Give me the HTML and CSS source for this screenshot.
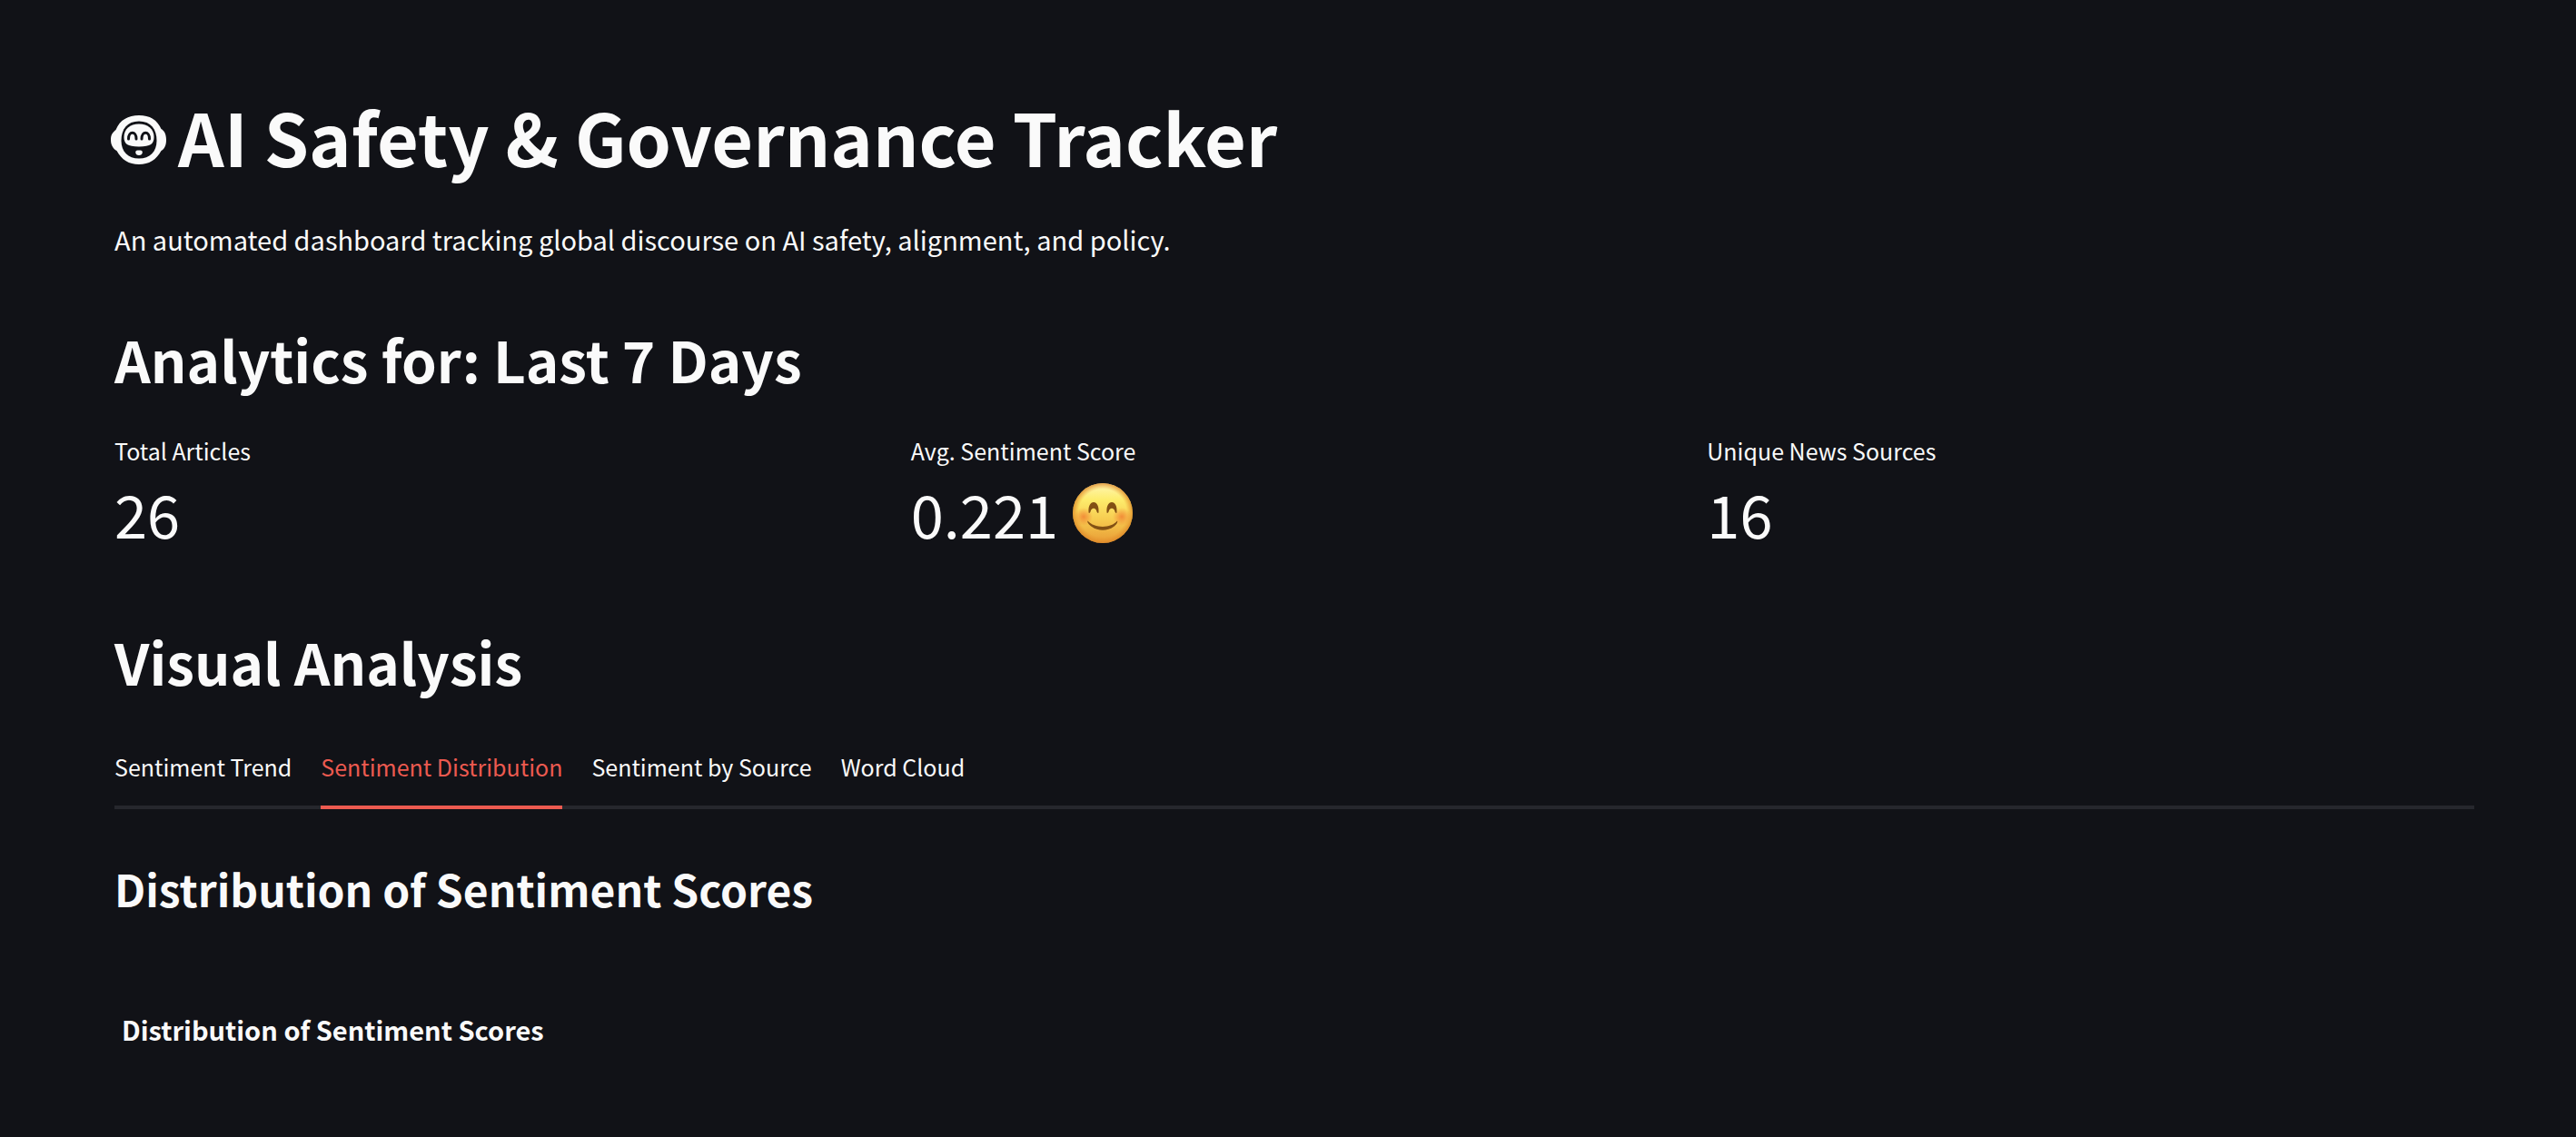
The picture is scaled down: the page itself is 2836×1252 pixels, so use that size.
FILE: index.html
```html
<!DOCTYPE html>
<html lang="en">
<head>
<meta charset="utf-8">
<meta name="viewport" content="width=device-width, initial-scale=1">
<title>AI Safety &amp; Governance Tracker</title>
<link rel="stylesheet" href="styles.css">
</head>
<body>
<main class="page">
  <h1 class="title">
    <svg class="title-icon" viewBox="0 0 62 54" aria-hidden="true">
      <path fill="currentColor" d="M31 0C43 0 51 5 55.500 15C59 17 61 21 61 27C61 33 59 37 55.500 39C50 49 42 54 31 54S12 49 6.500 39C3 37 0 33 0 27S2 19 5.500 16C10 5 19 0 31 0Z"/>
      <path fill="#111217" d="M31 6.500C44 6.500 50.500 15 50.500 28C50.500 40 43 47.500 31 47.500S11.500 40 11.500 28C11.500 15 18 6.500 31 6.500Z"/>
      <path fill="currentColor" d="M31 9.500C41 9.500 47.500 15 47.500 24C47.500 31 44 34.500 31 34.500S14.500 31 14.500 24C14.500 15 21 9.500 31 9.500Z"/>
      <path fill="none" stroke="#111217" stroke-width="3" stroke-linecap="round" d="M19.500 26C19.500 17 28 17 28 26M34 26C34 17 42.500 17 42.500 26"/>
      <path fill="currentColor" d="M29.500 38.500H32.500C36 38.500 35.500 44 31 44S26 38.500 29.500 38.500Z"/>
    </svg>
    <span>AI Safety &amp; Governance Tracker</span>
  </h1>
  <p class="intro">An automated dashboard tracking global discourse on AI safety, alignment, and policy.</p>

  <section>
    <h2 class="heading">Analytics for: Last 7 Days</h2>
    <dl class="metrics">
      <div class="metric">
        <dt>Total Articles</dt>
        <dd>26</dd>
      </div>
      <div class="metric">
        <dt>Avg. Sentiment Score</dt>
        <dd>0.221
          <svg class="smile" viewBox="0 0 66 66" role="img" aria-label="Smiling face">
            <defs>
              <linearGradient id="skin" x1="0" y1="0" x2="0" y2="1">
                <stop offset="0" stop-color="#fff7b5"/>
                <stop offset=".28" stop-color="#fdec6c"/>
                <stop offset=".6" stop-color="#f7cc50"/>
                <stop offset="1" stop-color="#e89b35"/>
              </linearGradient>
              <radialGradient id="rim">
                <stop offset=".8" stop-color="#e9922c" stop-opacity="0"/>
                <stop offset="1" stop-color="#dc8728" stop-opacity=".8"/>
              </radialGradient>
              <radialGradient id="cheek">
                <stop offset="0" stop-color="#f0782f" stop-opacity=".75"/>
                <stop offset="1" stop-color="#f0782f" stop-opacity="0"/>
              </radialGradient>
            </defs>
            <circle cx="33" cy="33" r="33" fill="url(#skin)"/>
            <circle cx="33" cy="33" r="33" fill="url(#rim)"/>
            <circle cx="12" cy="37" r="10" fill="url(#cheek)"/>
            <circle cx="54" cy="37" r="10" fill="url(#cheek)"/>
            <path fill="#825014" d="M17.500 32C17 25 19.500 21 23 21S29 25 28.500 32C28.500 33.500 27 33 26.500 31.500C25.500 26.500 20.500 26.500 19.500 31.500C19 33 17.500 33.500 17.500 32ZM37.500 32C37 25 39.500 21 43 21S49 25 48.500 32C48.500 33.500 47 33 46.500 31.500C45.500 26.500 40.500 26.500 39.500 31.500C39 33 37.500 33.500 37.500 32ZM16.500 41.500C24 50 42 50 49 41.500C50 43 48 46 45 48C38 53 28 53 21 48C18 46 15.500 43 16.500 41.500Z"/>
          </svg>
        </dd>
      </div>
      <div class="metric">
        <dt>Unique News Sources</dt>
        <dd>16</dd>
      </div>
    </dl>
  </section>

  <section class="analysis">
    <h2 class="heading">Visual Analysis</h2>
    <div class="tabs" role="tablist">
      <button class="tab" type="button" role="tab" aria-selected="false">Sentiment Trend</button>
      <button class="tab" type="button" role="tab" aria-selected="true" aria-controls="distribution">Sentiment Distribution</button>
      <button class="tab" type="button" role="tab" aria-selected="false">Sentiment by Source</button>
      <button class="tab" type="button" role="tab" aria-selected="false">Word Cloud</button>
    </div>
    <div class="panel" id="distribution" role="tabpanel">
      <h3 class="subheading">Distribution of Sentiment Scores</h3>
      <figure class="chart">
        <figcaption>Distribution of Sentiment Scores</figcaption>
      </figure>
    </div>
  </section>
</main>
</body>
</html>
```

FILE: styles.css
```css
* {
  box-sizing: border-box;
  margin: 0;
  padding: 0;
}

body {
  background: #111217;
  color: #fafafa;
  font-family: "Noto Sans CJK SC", "Noto Sans", sans-serif;
  font-size: 25px;
  line-height: 42px;
}

.page {
  padding: 97px 112px 97px 126px;
}

.title {
  display: flex;
  align-items: center;
  gap: 12px;
  margin-left: -4px;
  font-size: 79px;
  font-weight: 700;
  line-height: 106px;
}

.title-icon {
  flex: none;
  width: 62px;
  height: 54px;
  margin-top: 8px;
}

.intro {
  margin: 34px 0 62px;
  font-size: 29px;
  line-height: 52px;
}

.heading {
  font-size: 62px;
  font-weight: 600;
  line-height: 88px;
}

.metrics {
  display: grid;
  grid-template-columns: repeat(3, 1fr);
  gap: 32px;
  margin-top: 36px;
}

.metric dd {
  display: flex;
  align-items: center;
  gap: 16px;
  margin-top: 5px;
  font-size: 65px;
  line-height: 86px;
}

.smile {
  width: 66px;
  height: 66px;
}

.analysis {
  margin-top: 76px;
}

.tabs {
  display: flex;
  gap: 32px;
  margin-top: 39px;
  box-shadow: inset 0 -4px #26272d;
}

.tab {
  padding: 12px 0 22px;
  border: 0;
  border-bottom: 4px solid transparent;
  background: none;
  color: inherit;
  font: inherit;
  cursor: pointer;
}

.tab[aria-selected="true"] {
  border-color: #ec5a50;
  color: #ec5a50;
}

.panel {
  padding-top: 52px;
}

.subheading {
  font-size: 48px;
  font-weight: 600;
  line-height: 70px;
}

.chart {
  margin-top: 98px;
  padding-left: 8px;
  font-size: 29px;
  font-weight: 700;
  line-height: 44px;
}
```
